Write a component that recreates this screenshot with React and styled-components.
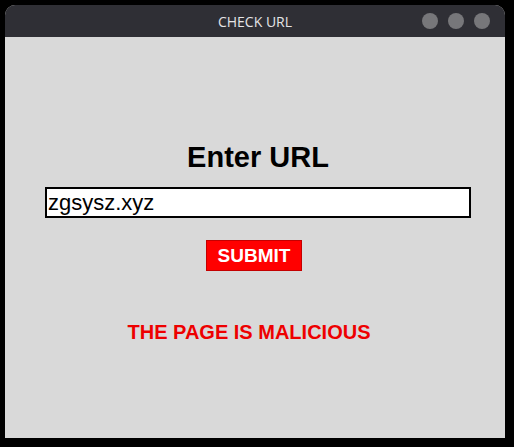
import React from 'react';
import styled, { createGlobalStyle } from 'styled-components';

const GlobalStyle = createGlobalStyle`
  html, body {
    margin: 0;
    padding: 0;
    background: #000;
  }
  body {
    font-family: "Liberation Sans", Arial, sans-serif;
  }
`;

const Screen = styled.div`
  width: 514px;
  height: 447px;
  padding: 5px 9px 9px 5px;
  box-sizing: border-box;
  background: #000;
`;

const Window = styled.div`
  width: 500px;
  height: 433px;
  display: flex;
  flex-direction: column;
  background: #d9d9d9;
  border-radius: 10px 10px 0 0;
  overflow: hidden;
`;

const TitleBar = styled.div`
  height: 32px;
  flex-shrink: 0;
  background: #2f2f35;
  display: flex;
  align-items: center;
  justify-content: center;
  position: relative;
  font-family: "Open Sans", "Noto Sans", sans-serif;
  font-size: 14px;
  color: #e4e4e6;
`;

const Controls = styled.div`
  position: absolute;
  right: 15px;
  top: 8px;
  display: flex;
  gap: 10px;
`;

const Dot = styled.span`
  width: 16px;
  height: 16px;
  border-radius: 50%;
  background: #77777a;
`;

const Content = styled.main`
  flex: 1;
  display: flex;
  flex-direction: column;
  align-items: center;
  padding-top: 104px;
  padding-left: 6px;
`;

const Heading = styled.h1`
  margin: 0;
  font-size: 29px;
  line-height: 33px;
  font-weight: 700;
  color: #000;
`;

const UrlInput = styled.input`
  margin-top: 13px;
  width: 426px;
  height: 31px;
  box-sizing: border-box;
  border: 2px solid #000;
  background: #fff;
  padding: 0 1px;
  font-family: "Liberation Sans", Arial, sans-serif;
  font-size: 22px;
  color: #000;
  outline: none;
`;

const SubmitButton = styled.button`
  margin-top: 22px;
  margin-left: -8px;
  width: 96px;
  height: 31px;
  background: #ff0000;
  border: 1px solid #c40000;
  color: #fff;
  font-family: "Liberation Sans", Arial, sans-serif;
  font-weight: 700;
  font-size: 19px;
  padding: 0;
`;

const Verdict = styled.p`
  margin: 50px 0 0 -18px;
  font-size: 20px;
  font-weight: 700;
  color: #ee0000;
`;

export default function App() {
  return (
    <>
      <GlobalStyle />
      <Screen>
        <Window>
          <TitleBar>
            CHECK URL
            <Controls>
              <Dot />
              <Dot />
              <Dot />
            </Controls>
          </TitleBar>
          <Content>
            <Heading>Enter URL</Heading>
            <UrlInput defaultValue="zgsysz.xyz" />
            <SubmitButton>SUBMIT</SubmitButton>
            <Verdict>THE PAGE IS MALICIOUS</Verdict>
          </Content>
        </Window>
      </Screen>
    </>
  );
}
